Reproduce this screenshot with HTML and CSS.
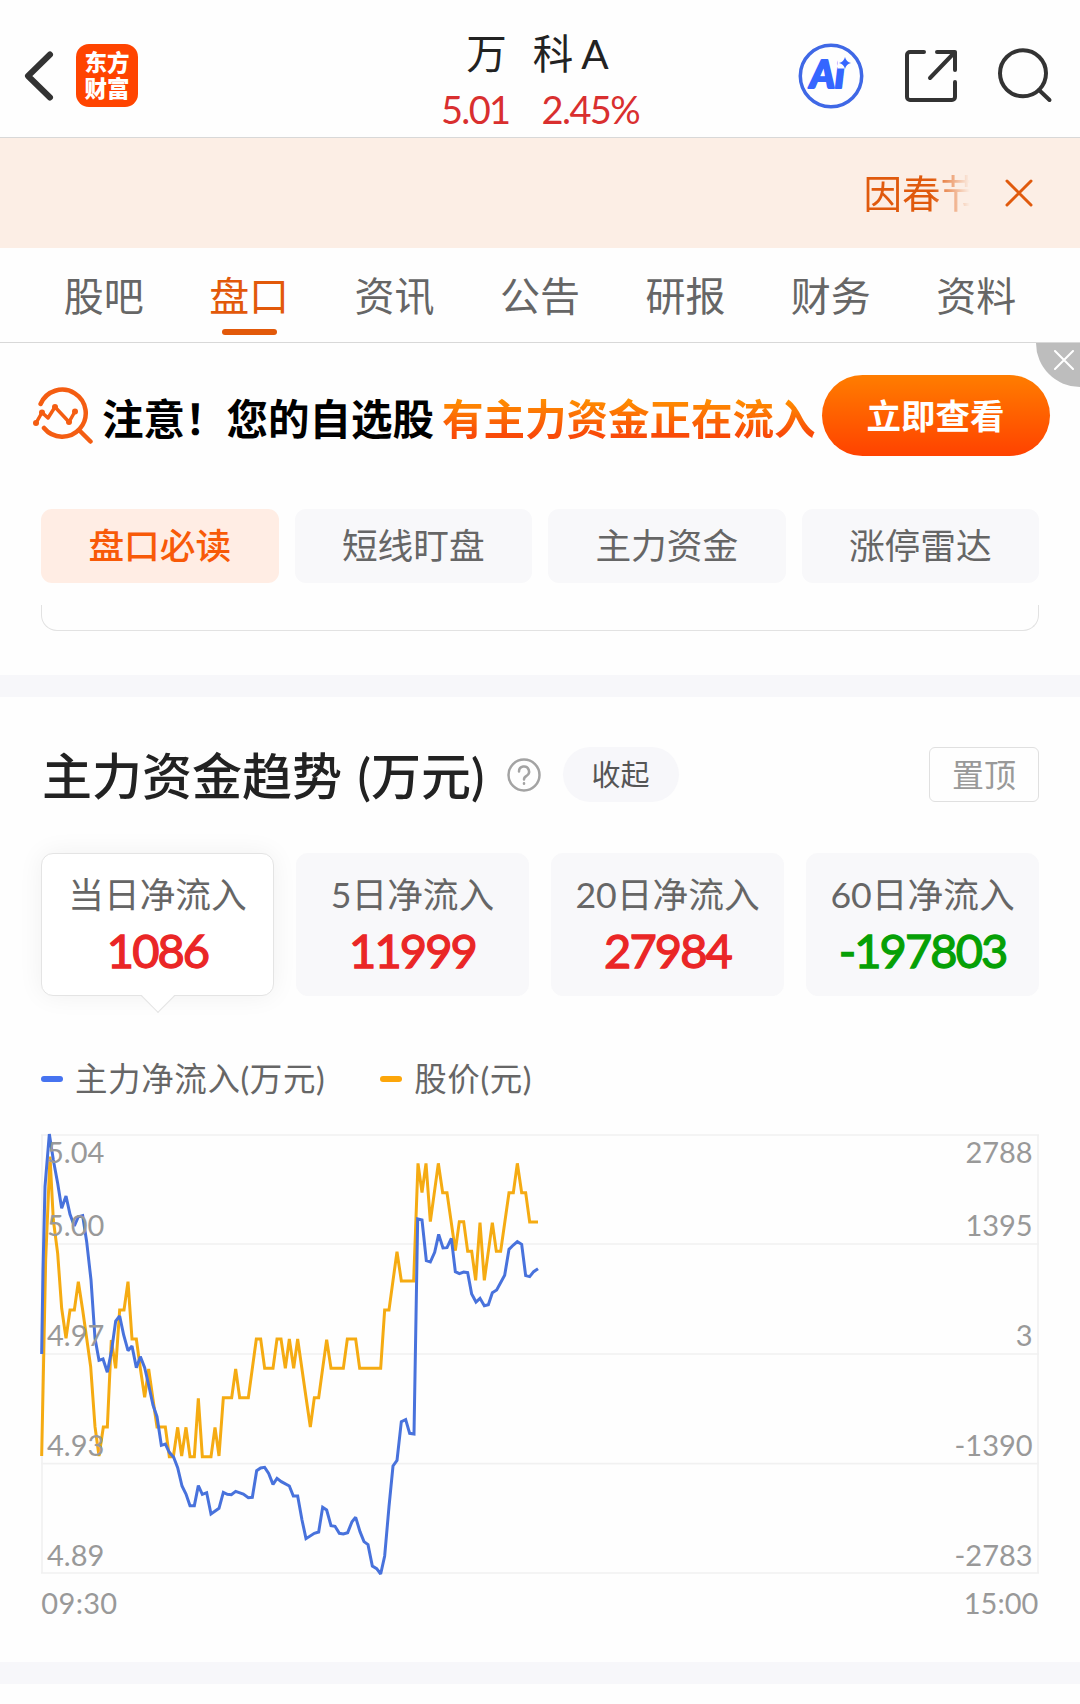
FILE: index.html
```html
<!DOCTYPE html>
<html lang="zh-CN">
<head>
<meta charset="UTF-8">
<title>万科A 盘口</title>
<link rel="stylesheet" href="styles.css">
</head>
<body>

	<header class="header">
		<div class="header_left">
			<svg class="back" width="34" height="56" viewBox="0 0 34 56"><path d="M28 6.500L6 28l22 21.500"/></svg>
			<div class="logo"><span>东方</span><span>财富</span></div>
		</div>
		<div class="stock">
			<div class="stock_name"><span>万</span><span class="ke">科</span><span class="a">A</span></div>
			<div class="stock_price"><span>5.01</span><span>2.45%</span></div>
		</div>
		<div class="header_right">
			<svg class="ai" width="66" height="66" viewBox="0 0 66 66">
				<text x="12" y="45">Ai</text>
				<rect x="39.500" y="12" width="16" height="13.500"/>
				<circle cx="33" cy="33" r="30.700"/>
				<path d="M47 14q1.200 5 6 6q-4.800 1-6 6q-1.200-5-6-6q4.800-1 6-6z"/>
			</svg>
			<svg class="icon" width="54" height="54" viewBox="0 0 54 54"><path d="M20 3H6a3 3 0 0 0-3 3v42a3 3 0 0 0 3 3h42a3 3 0 0 0 3-3V33M33 3h18v18M51 3L26 29"/></svg>
			<svg class="icon" width="56" height="56" viewBox="0 0 56 56"><circle cx="26" cy="25.300" r="23"/><path d="M42 42l10.500 10"/></svg>
		</div>
	</header>

	<div class="notice">
		<div class="notice_text">因春节</div>
		<svg width="28" height="28" viewBox="0 0 28 28"><path d="M2 2l24 24M26 2L2 26"/></svg>
	</div>

	<nav class="tabs">
		<a>股吧</a>
		<a class="on">盘口</a>
		<a>资讯</a>
		<a>公告</a>
		<a>研报</a>
		<a>财务</a>
		<a>资料</a>
	</nav>

	<div class="banner">
		<svg class="banner_icon" width="62" height="60" viewBox="0 0 62 60">
			<path d="M8.600 17A23.500 23.500 0 1 1 12 41M48 44l10.500 10.500"/>
			<path class="thin" d="M4 36L10 25.500l6 5.500L23 20L37 35L43 24.500"/>
			<circle cx="4" cy="36" r="3"/><circle cx="10" cy="25.500" r="3"/><circle cx="23" cy="20" r="3"/><circle cx="37" cy="35" r="3"/><circle cx="43" cy="24.500" r="3"/>
		</svg>
		<span class="banner_text">注意！您的自选股</span>
		<span class="banner_hot">有主力资金正在流入</span>
		<span class="banner_btn">立即查看</span>
		<span class="banner_close"><svg width="20" height="20" viewBox="0 0 20 20"><path d="M1 1l18 18M19 1L1 19"/></svg></span>
	</div>

	<div class="pills">
		<a class="on">盘口必读</a>
		<a>短线盯盘</a>
		<a>主力资金</a>
		<a>涨停雷达</a>
	</div>
	<div class="card_end"></div>

	<div class="band"></div>

	<section class="trend">
		<div class="trend_head">
			<h2>主力资金趋势 (万元)</h2>
			<svg class="help" width="34" height="34" viewBox="0 0 34 34"><circle cx="17" cy="17" r="15.500"/><path d="M12 13.500a5 5 0 1 1 7.500 4.300q-2.500 1.400-2.500 3.700"/><path d="M17 25.200v.6"/></svg>
			<span class="fold">收起</span>
			<span class="pin">置顶</span>
		</div>

		<div class="stats">
			<div class="stat on"><p>当日净流入</p><b>1086</b></div>
			<div class="stat"><p>5日净流入</p><b>11999</b></div>
			<div class="stat"><p>20日净流入</p><b>27984</b></div>
			<div class="stat"><p>60日净流入</p><b class="down">-197803</b></div>
		</div>

		<div class="legend">
			<span class="blue">主力净流入(万元)</span>
			<span class="yellow">股价(元)</span>
		</div>

		<svg class="chart" width="998" height="500" viewBox="33 0 2994 1500">
			<path class="grid" d="M33 45H3027M33 372H3027M33 702H3027M33 1031H3027M33 1359H3027M36 45V1359M3024 45V1359"/>
			<polyline class="line_price" points="35,1008 47,420 60,110 70,300 83,400 95,565 108,655 120,570 133,570 145,485 158,570 170,655 182,740 195,920 207,1008 220,921 232,921 244,660 257,745 269,570 282,570 294,485 306,657 319,657 331,745 344,832 356,747 368,832 381,921 406,921 418,1010 430,1010 443,922 455,1008 468,922 480,1010 493,1010 505,835 517,1010 543,1010 555,922 567,1008 580,833 605,833 617,747 629,833 655,833 667,745 679,657 692,657 704,745 729,745 741,657 753,657 766,745 778,657 791,745 803,657 828,832 841,921 853,833 866,833 878,745 890,659 903,745 940,745 952,657 977,657 989,745 1052,745 1064,570 1077,570 1089,482 1101,395 1114,483 1151,483 1164,130 1176,218 1188,130 1201,305 1213,218 1225,130 1238,218 1251,218 1276,392 1288,305 1301,305 1313,394 1325,394 1337,481 1350,308 1363,481 1387,308 1399,394 1412,394 1437,218 1450,218 1462,130 1475,218 1487,218 1499,306 1524,306"/>
			<polyline class="line_flow" points="35,702 39,450 45,200 58,42 70,120 83,190 95,265 108,228 120,283 133,318 145,290 158,287 170,365 183,480 195,655 207,721 219,717 232,757 245,690 257,603 269,588 281,645 294,692 306,678 319,743 331,710 344,743 356,795 369,855 381,890 394,976 406,972 418,997 431,1012 443,1043 456,1098 468,1122 480,1157 493,1157 505,1097 517,1123 530,1118 543,1182 567,1165 580,1117 592,1123 604,1124 617,1114 640,1122 655,1133 667,1132 680,1052 692,1044 704,1042 716,1060 729,1093 741,1075 754,1085 778,1098 790,1128 803,1128 816,1200 828,1256 853,1240 866,1236 878,1162 890,1170 903,1217 915,1219 928,1240 940,1242 953,1238 966,1205 977,1192 990,1235 1002,1265 1014,1274 1027,1338 1040,1346 1052,1362 1064,1308 1077,1160 1089,1038 1101,1021 1114,905 1127,899 1139,940 1152,942 1163,297 1176,300 1189,422 1201,426 1214,397 1226,343 1239,384 1251,383 1264,355 1276,455 1288,461 1301,456 1313,458 1325,522 1338,546 1350,535 1363,557 1375,554 1387,518 1400,510 1424,466 1437,388 1450,375 1462,365 1475,373 1487,467 1499,470 1511,455 1524,446"/>
			<g class="axis">
				<text x="51" y="130">5.04</text>
				<text x="51" y="349">5.00</text>
				<text x="51" y="679">4.97</text>
				<text x="51" y="1008">4.93</text>
				<text x="51" y="1338">4.89</text>
				<text class="time" x="34" y="1483">09:30</text>
			</g>
			<g class="axis right">
				<text x="3008" y="130">2788</text>
				<text x="3008" y="349">1395</text>
				<text x="3008" y="679">3</text>
				<text x="3008" y="1008">-1390</text>
				<text x="3008" y="1338">-2783</text>
				<text x="3025" y="1483">15:00</text>
			</g>
		</svg>
	</section>

	<div class="band"></div>

</body>
</html>
```

FILE: styles.css
```css
body, div, h2, p{
	margin : 0;
	padding : 0;
}
body{
	width : 1080px;
	background : #fefefe;
	font-family : Lato, "Noto Sans CJK SC", sans-serif;
	color : #222;
	overflow-x : hidden;
}
svg{
	display : block;
	fill : none;
	stroke-linecap : round;
	stroke-linejoin : round;
}
/* 상단 */
.header{
	display : grid;
	grid-template-columns : 1fr auto 1fr;
	height : 137px;
	border-bottom : 1px solid #d8d8d8;
}
.header_left{
	display : flex;
	align-items : center;
	gap : 20px;
	height : 123px;
	padding : 14px 0 0 22px;
}
.back{
	stroke : #333;
	stroke-width : 6;
}
.logo{
	display : flex;
	flex-direction : column;
	align-items : center;
	justify-content : center;
	width : 62px;
	height : 63px;
	border-radius : 13px;
	background : #ff4400;
	color : #fff;
	font-size : 22.5px;
	font-weight : 900;
	line-height : 26px;
}
.stock{
	padding-top : 27px;
}
.stock_name{
	display : flex;
	justify-content : center;
	padding-right : 5px;
	font-size : 40.5px;
	line-height : 53px;
}
.stock_name .ke{
	margin-left : 26px;
}
.stock_name .a{
	margin-left : 8px;
}
.stock_price{
	display : flex;
	justify-content : center;
	gap : 32px;
	color : #d92f2f;
	font-size : 38px;
	line-height : 58px;
	letter-spacing : -1.6px;
}
.header_right{
	display : flex;
	align-items : center;
	justify-content : flex-end;
	height : 125px;
	padding : 13px 27px 0 0;
}
.header_right .icon{
	margin-left : 39px;
	stroke : #333;
	stroke-width : 4;
}
.header_right .ai{
	margin-right : 1px;
}
.ai circle{
	stroke : #3f68e6;
	stroke-width : 3.5;
}
.ai text{
	fill : #3566ff;
	stroke : #3566ff;
	stroke-width : 2;
	font-size : 38px;
	font-weight : 900;
	font-style : italic;
}
.ai rect{
	fill : #fefefe;
}
.ai path{
	fill : #3566ff;
}
/* 공지 */
.notice{
	display : flex;
	align-items : center;
	justify-content : flex-end;
	height : 110px;
	padding-right : 47px;
	background : #fceee5;
}
.notice_text{
	margin-right : 26px;
	padding-bottom : 5px;
	color : #e05a0d;
	font-size : 38.5px;
	white-space : nowrap;
	-webkit-mask-image : linear-gradient(to right, #000 60%, transparent 92%);
	mask-image : linear-gradient(to right, #000 60%, transparent 92%);
}
.notice svg{
	stroke : #e05a0d;
	stroke-width : 3;
}
/* 탭 */
.tabs{
	display : flex;
	height : 94px;
	padding : 0 31px;
	border-bottom : 1px solid #d8d8d8;
}
.tabs a{
	display : flex;
	flex : 1;
	flex-direction : column;
	align-items : center;
	color : #666;
	font-size : 40px;
	line-height : 80px;
	padding-top : 8px;
}
.tabs .on{
	color : #e2590a;
}
.tabs .on::after{
	content : "";
	width : 55px;
	height : 6px;
	margin-top : -7px;
	border-radius : 3px;
	background : #e2590a;
}
/* 광고 */
.banner{
	position : relative;
	display : flex;
	align-items : center;
	height : 144px;
	padding-left : 32px;
	font-size : 41.5px;
	font-weight : 700;
	white-space : nowrap;
}
.banner svg{
	stroke : #f45d12;
	stroke-width : 4.500;
}
.banner .banner_icon{
	margin-top : 3px;
}
.banner .thin{
	stroke-width : 3.5;
}
.banner circle{
	fill : #f45d12;
	stroke : none;
}
.banner_text{
	margin-left : 8px;
	padding-top : 3px;
	color : #000;
}
.banner_hot{
	margin-left : 8px;
	padding-top : 3px;
	background : linear-gradient(#ff9500 20%, #f94a08 80%);
	-webkit-background-clip : text;
	background-clip : text;
	color : transparent;
}
.banner_btn{
	width : 228px;
	margin-left : 6px;
	border-radius : 41px;
	background : linear-gradient(#ff7d00, #ff4200);
	color : #fff;
	font-size : 34.5px;
	line-height : 81px;
	text-align : center;
}
.banner_close{
	position : absolute;
	top : 0;
	right : 0;
	width : 44px;
	height : 44px;
	border-bottom-left-radius : 44px;
	background : #bdbdbd;
}
.banner_close svg{
	margin : 7px 0 0 18px;
	stroke : #fff;
	stroke-width : 2;
}
.pills{
	display : grid;
	grid-template-columns : repeat(4, 1fr);
	gap : 16px;
	padding : 22px 41px 0;
}
.pills a{
	height : 74px;
	border-radius : 11px;
	background : #f8f8fa;
	color : #666;
	font-size : 35.7px;
	line-height : 74px;
	text-align : center;
}
.pills .on{
	background : #ffede4;
	color : #f85a08;
	font-weight : 500;
}
.card_end{
	height : 25px;
	margin : 22px 41px 44px;
	border : 1px solid #e2e2e2;
	border-top : 0;
	border-radius : 0 0 16px 16px;
}
.band{
	height : 22px;
	background : #f7f7fa;
}
/* 자금 추세 */
.trend{
	height : 965px;
	padding : 0 41px;
	box-sizing : border-box;
}
.trend_head{
	display : flex;
	align-items : center;
	padding-top : 50px;
	height : 55px;
}
.trend h2{
	padding : 3px 0 0 1px;
	font-size : 50px;
	font-weight : 500;
	line-height : 55px;
	word-spacing : 3px;
	white-space : nowrap;
}
.help{
	margin-left : 22px;
	stroke : #a3a3a3;
	stroke-width : 2.5;
}
.fold{
	width : 116px;
	margin-left : 22px;
	border-radius : 28px;
	background : #f7f7fa;
	color : #555;
	font-size : 29px;
	line-height : 55px;
	text-align : center;
}
.pin{
	width : 108px;
	margin-left : auto;
	border : 1px solid #e0e0e0;
	border-radius : 6px;
	color : #999;
	font-size : 32px;
	line-height : 53px;
	text-align : center;
}
.stats{
	display : grid;
	grid-template-columns : repeat(4, 1fr);
	gap : 22px;
	margin-top : 51px;
}
.stat{
	height : 143px;
	box-sizing : border-box;
	border : 1px solid #f8f8fa;
	border-radius : 12px;
	background : #f8f8fa;
	text-align : center;
}
.stat p{
	padding-top : 14px;
	color : #666;
	font-size : 35.7px;
	line-height : 54px;
	white-space : nowrap;
}
.stat b{
	display : block;
	color : #ea2626;
	font-size : 47px;
	font-weight : 400;
	line-height : 57px;
	letter-spacing : -1.9px;
	-webkit-text-stroke : 1.3px currentColor;
}
.stat .down{
	color : #06a006;
}
.stat.on{
	position : relative;
	border-color : #e4e4e4;
	background : #fff;
	box-shadow : 0 0 26px rgba(0, 0, 0, 0.06);
}
.stat.on::after{
	content : "";
	position : absolute;
	left : 104px;
	bottom : -13px;
	width : 23px;
	height : 23px;
	border : solid #e4e4e4;
	border-width : 0 1px 1px 0;
	background : linear-gradient(135deg, transparent 50%, #fff 50%);
	transform : rotate(45deg);
}
.legend{
	display : flex;
	gap : 55px;
	margin-top : 59px;
	height : 48px;
	color : #666;
	font-size : 32.5px;
	line-height : 50px;
	letter-spacing : 0.6px;
}
.legend span{
	display : flex;
	align-items : center;
}
.legend span::before{
	content : "";
	width : 22px;
	height : 6px;
	margin-right : 12px;
	border-radius : 3px;
	background : #4673f0;
}
.legend .yellow::before{
	background : #fca60a;
}
.chart{
	margin-top : 17px;
	overflow : visible;
}
.grid{
	stroke : #f1f1f1;
	stroke-width : 5;
	stroke-linecap : butt;
}
.line_price, .line_flow{
	stroke : #f5ab12;
	stroke-width : 9;
	stroke-linecap : butt;
	stroke-linejoin : miter;
	stroke-miterlimit : 2;
}
.line_flow{
	stroke : #4872dc;
}
.axis{
	fill : #999;
	font-size : 87px;
}
.axis .time{
	letter-spacing : 1px;
}
.right{
	text-anchor : end;
}
```
